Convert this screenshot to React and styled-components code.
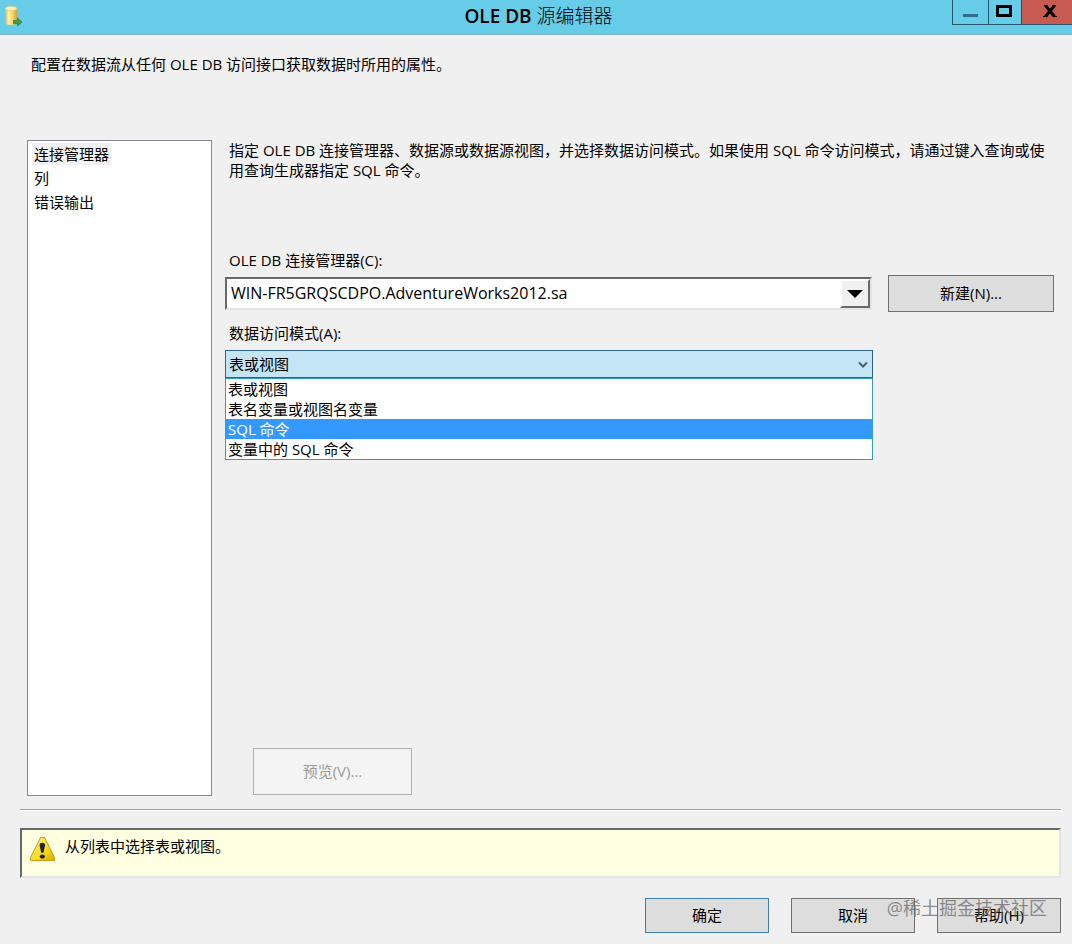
import React, { useState } from 'react'
import styled, { createGlobalStyle } from 'styled-components'

const pages = ['连接管理器', '列', '错误输出']
const modes = ['表或视图', '表名变量或视图名变量', 'SQL 命令', '变量中的 SQL 命令']

const DatabaseIcon = () => (
    <svg width='20' height='24' viewBox='0 0 20 24' aria-hidden='true'>
        <defs>
            <linearGradient id='can'>
                <stop offset='0' stopColor='#d9b04c' />
                <stop offset='.3' stopColor='#fff3b0' />
                <stop offset='.65' stopColor='#f3d467' />
                <stop offset='1' stopColor='#cfa040' />
            </linearGradient>
        </defs>
        <path d='M0 3.500V17.500c0 1.600 2.600 2.500 6 2.500s6-.9 6-2.500V3.500z' fill='url(#can)' />
        <ellipse cx='6' cy='3.500' rx='6' ry='2.200' fill='#fbeeb4' stroke='#e0c46a' strokeWidth='.6' />
        <path d='M8.500 15.500h4v-2.500l4.500 4-4.500 4v-2.500h-4z' fill='#4c9a3f' stroke='#347a33' strokeWidth='.7' />
    </svg>
)

const WarningIcon = () => (
    <svg width='27' height='26' viewBox='0 0 28 26' aria-hidden='true'>
        <defs>
            <linearGradient id='warn' x1='0' y1='0' x2='1' y2='1'>
                <stop offset='0' stopColor='#fff27a' />
                <stop offset='.6' stopColor='#f8dc1c' />
                <stop offset='1' stopColor='#d9a800' />
            </linearGradient>
        </defs>
        <path d='M12 1h4l10.500 21v3h-25v-3z' fill='url(#warn)' stroke='#b99a1c' strokeLinejoin='round' />
        <path d='M11 9q0-2.500 2.800-2.500T16.600 9l-1.600 8h-2.400z' fill='#222' />
        <ellipse cx='13.800' cy='20.800' rx='2.700' ry='2.200' fill='#222' />
    </svg>
)

const App = () => {
    const [page, setPage] = useState(pages[0])
    const [mode, setMode] = useState(modes[0])
    const [active, setActive] = useState(modes[2])

    return (
        <SWindow>
            <GlobalStyle />
            <STitleBar>
                <DatabaseIcon />
                <STitle>OLE DB <span>源编辑器</span></STitle>
                <SControls>
                    <SControl $width={36} aria-label='最小化'>
                        <svg width='16' height='16'><path d='M0 11h15v3H0z' fill='#2f6f8c' /></svg>
                    </SControl>
                    <SControl $width={33} aria-label='最大化'>
                        <svg width='18' height='16'><path d='M1.500 3.500h13v9h-13z' fill='none' stroke='#000' strokeWidth='3' /></svg>
                    </SControl>
                    <SControl $width={51} $close aria-label='关闭'>
                        <svg width='14' height='14'><path d='M1 1.500h4M9 1.500h4M0 12.500h4.500M9.500 12.500H14' stroke='#000' strokeWidth='1' fill='none' /><path d='M2.500 1.500l9 11M11.500 1.500l-9 11' stroke='#000' strokeWidth='3' /></svg>
                    </SControl>
                </SControls>
            </STitleBar>

            <SIntro>配置在数据流从任何 OLE DB 访问接口获取数据时所用的属性。</SIntro>

            <SBody>
                <SSidebar>
                    {pages.map((name) => (
                        <SPage key={name} $active={name === page} onClick={() => setPage(name)}>{name}</SPage>
                    ))}
                </SSidebar>
                <SMain>
                    <SDescription>
                        指定 OLE DB 连接管理器、数据源或数据源视图，并选择数据访问模式。如果使用 SQL 命令访问模式，请通过键入查询或使用查询生成器指定 SQL 命令。
                    </SDescription>
                    <SLabel htmlFor='connection'>OLE DB 连接管理器(C):</SLabel>
                    <SFieldRow>
                        <SCombo>
                            <SConnection id='connection'>
                                <option>WIN-FR5GRQSCDPO.AdventureWorks2012.sa</option>
                            </SConnection>
                            <SComboArrow>
                                <svg width='16' height='8'><path d='M0 0h16L8 8z' /></svg>
                            </SComboArrow>
                        </SCombo>
                        <SNewButton>新建(N)...</SNewButton>
                    </SFieldRow>
                    <SLabel htmlFor='mode'>数据访问模式(A):</SLabel>
                    <SModeField>
                        <SMode id='mode' value={mode} onChange={(e) => setMode(e.target.value)}>
                            {modes.map((name) => <option key={name}>{name}</option>)}
                        </SMode>
                        <SChevron width='10' height='8' viewBox='0 0 10 8'>
                            <path d='M1 1.500l4 4 4-4' fill='none' stroke='#44606e' strokeWidth='2' />
                        </SChevron>
                        <SList role='listbox' aria-label='数据访问模式'>
                            {modes.map((name) => (
                                <SOption
                                    key={name}
                                    role='option'
                                    aria-selected={name === active}
                                    $active={name === active}
                                    onMouseEnter={() => setActive(name)}
                                    onClick={() => setMode(name)}
                                >
                                    {name}
                                </SOption>
                            ))}
                        </SList>
                    </SModeField>
                    <SPreview disabled>预览(V)...</SPreview>
                </SMain>
            </SBody>

            <SDivider />
            <SStatus>
                <WarningIcon />
                <p>从列表中选择表或视图。</p>
            </SStatus>
            <SFooter>
                <SAction $primary>确定</SAction>
                <SAction>取消</SAction>
                <SAction>帮助(H)</SAction>
                <SWatermark>@稀土掘金技术社区</SWatermark>
            </SFooter>
        </SWindow>
    )
}

export default App

const GlobalStyle = createGlobalStyle`
    * {
        box-sizing: border-box;
    }
    body, p, h1, ul {
        margin: 0;
        padding: 0;
    }
    body, button, select {
        font-family: 'Open Sans', 'Noto Sans CJK SC', sans-serif;
        font-size: 15px;
        font-weight: 400;
        line-height: 20px;
        color: #000;
    }
    button {
        padding: 0;
    }
    svg {
        display: block;
        flex: none;
    }
`

const SWindow = styled.div`
    display: flex;
    flex-direction: column;
    min-height: 100vh;
    background: #f0f0f0;
`

const STitleBar = styled.header`
    display: grid;
    grid-template-columns: 1fr auto 1fr;
    height: 35px;
    padding-left: 5px;
    background: #66cce8;
    border-bottom: 1px solid #7fb4c8;

    > svg {
        margin-top: 5px;
    }
`

const STitle = styled.h1`
    font-size: 19px;
    line-height: 32px;
    font-weight: 600;

    span {
        font-weight: 300;
    }
`

const SControls = styled.div`
    display: flex;
    justify-content: flex-end;
    align-items: flex-start;
`

const SControl = styled.button`
    display: flex;
    align-items: center;
    justify-content: center;
    width: ${({ $width }) => $width}px;
    height: 25px;
    padding-bottom: 2px;
    border: solid #24566b;
    border-width: 0 0 1px 1px;
    background: ${({ $close }) => ($close ? '#c75b52' : 'none')};
    padding-left: ${({ $close }) => ($close ? 6 : 0)}px;
`

const SIntro = styled.p`
    padding: 19px 31px 66px;
`

const SBody = styled.div`
    display: flex;
    flex: 1;
    gap: 13px;
    padding: 0 18px 0 27px;
`

const SSidebar = styled.nav`
    display: flex;
    flex-direction: column;
    align-items: flex-start;
    gap: 2px;
    width: 185px;
    padding: 2px 4px;
    border: 1px solid #828790;
    background: #fff;
`

const SPage = styled.button`
    height: 22px;
    padding: 0 2px;
    border: none;
    background: ${({ $active }) => ($active ? '#f0f0f0' : 'none')};
`

const SMain = styled.main`
    display: flex;
    flex: 1;
    flex-direction: column;
    align-items: flex-start;
    min-width: 0;
`

const SDescription = styled.p`
    padding-left: 4px;
    margin-bottom: 70px;
`

const SLabel = styled.label`
    padding-left: 4px;
`

const SFieldRow = styled.div`
    display: flex;
    align-items: center;
    gap: 16px;
    width: 100%;
    margin: 5px 0 11px;
`

const SCombo = styled.div`
    display: flex;
    flex: 1;
    height: 33px;
    border: 2px solid;
    border-color: #696969 #e3e3e3 #e3e3e3 #696969;
    background: #fff;
`

const SConnection = styled.select`
    flex: 1;
    min-width: 0;
    padding: 0 4px 2px;
    border: none;
    background: none;
    font-size: 16px;
    appearance: none;
    outline: none;
`

const SComboArrow = styled.span`
    display: flex;
    align-items: center;
    justify-content: center;
    width: 30px;
    border: 2px solid;
    border-color: #fff #696969 #696969 #fff;
    background: #f0f0f0;
    pointer-events: none;
`

const SButton = styled.button`
    padding-bottom: 2px;
    border: 1px solid #707070;
    background: #ddd;
`

const SNewButton = styled(SButton)`
    width: 166px;
    height: 37px;
`

const SModeField = styled.div`
    position: relative;
    width: calc(100% - 181px);
    margin-top: 7px;
`

const SMode = styled.select`
    display: block;
    width: 100%;
    height: 28px;
    padding: 0 3px;
    border: 1px solid #2c628b;
    border-radius: 0;
    background: #c4e5f4;
    appearance: none;
    outline: none;
`

const SChevron = styled.svg`
    position: absolute;
    top: 11px;
    right: 5px;
    pointer-events: none;
`

const SList = styled.ul`
    position: absolute;
    top: 100%;
    left: 0;
    right: 0;
    border: 1px solid #2f9dc0;
    background: #fff;
    list-style: none;
`

const SOption = styled.li`
    height: 20px;
    padding-left: 2px;
    background: ${({ $active }) => ($active ? '#3399ff' : 'none')};
    color: ${({ $active }) => ($active ? '#fff' : '#000')};
`

const SPreview = styled(SButton)`
    width: 159px;
    height: 47px;
    margin: auto 0 1px 28px;
    border-color: #adb2b5;
    background: #f4f4f4;
    color: #9a9a9a;
`

const SDivider = styled.hr`
    height: 2px;
    margin: 13px 11px 17px 20px;
    border: solid;
    border-width: 1px 0;
    border-color: #a0a0a0 #fff #fff;
`

const SStatus = styled.div`
    display: flex;
    gap: 9px;
    height: 50px;
    margin: 0 11px 20px 20px;
    padding: 6px 7px;
    border: 2px solid;
    border-color: #696969 #e3e3e3 #e3e3e3 #696969;
    background: #ffffe1;
`

const SFooter = styled.footer`
    position: relative;
    display: flex;
    justify-content: flex-end;
    gap: 22px;
    padding: 0 11px 11px;
`

const SAction = styled(SButton)`
    width: 124px;
    height: 35px;
    border-color: ${({ $primary }) => ($primary ? '#3c7fb1' : '#707070')};
`

const SWatermark = styled.span`
    position: absolute;
    top: 0;
    right: 25px;
    font-size: 18px;
    color: rgba(95, 95, 95, .7);
    pointer-events: none;
`
